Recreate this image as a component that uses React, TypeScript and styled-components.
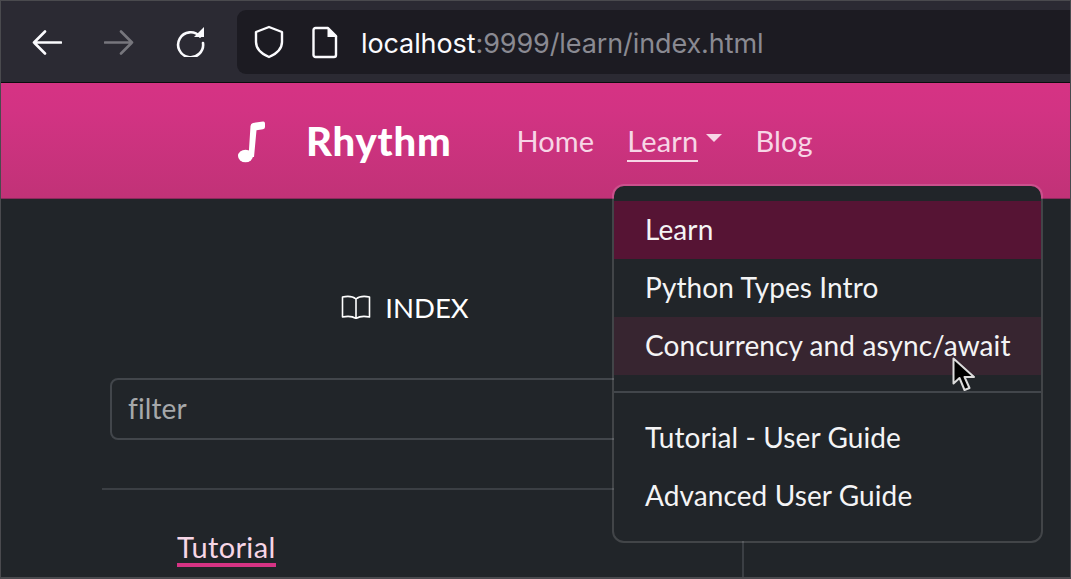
import React from "react";
import styled, { createGlobalStyle } from "styled-components";

const Global = createGlobalStyle`
  html, body { margin: 0; padding: 0; background: #212529; }
  * { box-sizing: border-box; }
`;

const Page = styled.div`
  position: relative;
  width: 1071px;
  height: 579px;
  overflow: hidden;
  background: #212529;
  font-family: "Lato", "Open Sans", sans-serif;
  display: flex;
  flex-direction: column;
  border: 1px solid #4a4a4e;
  border-width: 1px 1px 2px 1px;
`;

const Toolbar = styled.div`
  height: 82px;
  flex: none;
  background: #2b2a33;
  border-bottom: 1px solid #0c0c0d;
  display: flex;
  align-items: center;
  padding: 0 0 0 31px;
`;

const NavBtn = styled.svg<{ $dim?: boolean }>`
  width: 30px;
  height: 30px;
  flex: none;
  margin-right: 42px;
  fill: none;
  stroke: ${(p) => (p.$dim ? "#77767d" : "#fbfbfe")};
  stroke-width: 2.6;
  stroke-linecap: round;
  stroke-linejoin: round;
`;

const AddressBar = styled.div`
  flex: 1;
  height: 64px;
  margin-left: -11px;
  margin-right: -30px;
  background: #1c1b22;
  border-radius: 9px;
  display: flex;
  align-items: center;
  padding-left: 17px;
  font-family: "Inter", sans-serif;
  font-size: 27px;
  letter-spacing: -0.1px;
`;

const ShieldIcon = styled.svg`
  width: 30px;
  height: 34px;
  flex: none;
  margin-right: 28px;
  fill: none;
  stroke: #fbfbfe;
  stroke-width: 2.4;
  stroke-linejoin: round;
`;

const FileIcon = styled(ShieldIcon)`
  width: 26px;
  margin-right: 23px;
`;

const UrlText = styled.span`
  padding-top: 3px;
`;

const Host = styled.span`
  color: #fbfbfe;
`;
const UrlRest = styled.span`
  color: #8a8a92;
`;

const Header = styled.header`
  height: 116px;
  flex: none;
  background: linear-gradient(180deg, #d63384 0%, #d23383 25%, #c13277 100%);
  border-bottom: 1px solid #8a2a5c;
  display: flex;
  align-items: center;
  padding-left: 233px;
`;

const Note = styled.svg`
  width: 34px;
  height: 44px;
  flex: none;
  fill: #fff;
  margin-right: 38px;
`;

const Brand = styled.span`
  font-size: 40px;
  font-weight: 900;
  letter-spacing: 0.8px;
  color: #fff;
  margin-right: 65px;
`;

const NavItem = styled.span`
  font-size: 29px;
  color: #f7d6e6;
  letter-spacing: 0.15px;
  margin-right: 33px;
  display: inline-flex;
  align-items: center;
`;

const NavLabel = styled.span<{ $active?: boolean }>`
  border-bottom: 2px solid ${(p) => (p.$active ? "#f7d6e6" : "transparent")};
  padding-bottom: 2px;
  margin-top: 3px;
`;

const Caret = styled.span`
  width: 0;
  height: 0;
  margin-left: 8px;
  margin-bottom: 6px;
  border-left: 8.5px solid transparent;
  border-right: 8.5px solid transparent;
  border-top: 8px solid #f7d6e6;
`;

const Main = styled.main`
  flex: 1;
  display: flex;
  min-height: 0;
`;

const Sidebar = styled.aside`
  width: 743px;
  flex: none;
  border-right: 2px solid #3b3f44;
  padding: 0 0 0 101px;
  display: flex;
  flex-direction: column;
`;

const IndexTitle = styled.div`
  margin-top: 90px;
  display: flex;
  align-items: center;
  justify-content: center;
  gap: 14px;
  color: #fff;
  font-size: 27.5px;
  width: 606px;
  height: 36px;
`;

const Filter = styled.div`
  margin: 53px 0 0 8px;
  height: 62px;
  border: 2px solid #42464b;
  border-radius: 8px;
  display: flex;
  align-items: center;
  padding: 0 0 3px 16px;
  font-size: 28px;
  letter-spacing: 0.1px;
  color: #a6a8aa;
`;

const Rule = styled.div`
  margin-top: 48px;
  height: 2px;
  background: #3b3f44;
`;

const Tutorial = styled.span`
  margin: 40px 0 0 75px;
  align-self: flex-start;
  font-size: 29px;
  letter-spacing: 0.35px;
  color: #f7d6e6;
  line-height: 33px;
  border-bottom: 4px solid #d63384;
`;

const Menu = styled.div`
  position: absolute;
  left: 611px;
  top: 183px;
  width: 431px;
  height: 359px;
  background: #212529;
  border: 2px solid rgba(255, 255, 255, 0.15);
  background-clip: padding-box;
  border-radius: 12px;
  padding: 15px 0;
  display: flex;
  flex-direction: column;
`;

const MenuItem = styled.div<{ $bg?: string }>`
  height: 58px;
  flex: none;
  display: flex;
  align-items: center;
  padding: 0 0 3px 31px;
  font-size: 28px;
  letter-spacing: 0.1px;
  color: #f4f4f5;
  background: ${(p) => p.$bg || "transparent"};
`;

const MenuRule = styled.div`
  height: 2px;
  flex: none;
  margin: 16px 0;
  background: #42464b;
`;

const Cursor = styled.svg`
  position: absolute;
  left: 950px;
  top: 355px;
  width: 26px;
  height: 37px;
`;

export default function App() {
  return (
    <Page>
      <Global />
      <Toolbar>
        <NavBtn viewBox="0 0 30 30">
          <path d="M29 15.500H2M13 4.500 2 15.500l11 11" />
        </NavBtn>
        <NavBtn viewBox="0 0 30 30" $dim>
          <path d="M1 15.500h27M17 4.500l11 11-11 11" />
        </NavBtn>
        <NavBtn viewBox="0 0 30 30">
          <path d="M24 9.500A12.500 12.500 0 1 0 27 16" />
          <path d="M18 10h10V0z" fill="#fbfbfe" stroke="none" />
        </NavBtn>
        <AddressBar>
          <ShieldIcon viewBox="0 0 30 34">
            <path d="M15 2 2 7v10c0 7 6 12 13 15 7-3 13-8 13-15V7z" />
          </ShieldIcon>
          <FileIcon viewBox="0 0 26 34">
            <path d="M3.500 3h12.500l8 8v19a2 2 0 0 1-2 2H3.500a2 2 0 0 1-2-2V5a2 2 0 0 1 2-2z" />
            <path d="M15.500 2v10h10z" fill="#fbfbfe" stroke="none" />
          </FileIcon>
          <UrlText>
            <Host>localhost</Host>
            <UrlRest>:9999/learn/index.html</UrlRest>
          </UrlText>
        </AddressBar>
      </Toolbar>
      <Header>
        <Note viewBox="0 0 34 44">
          <ellipse cx="11.500" cy="37" rx="7.500" ry="6.300" />
          <path d="M14.500 38 L16.500 7 Q16.800 4.500 19 4 L29 2.500 Q31 2.300 31 4.500 V8 Q31 10 29 10.300 L22.500 11.300 L20 38z" />
        </Note>
        <Brand>Rhythm</Brand>
        <NavItem>
          <NavLabel>Home</NavLabel>
        </NavItem>
        <NavItem>
          <NavLabel $active>Learn</NavLabel>
          <Caret />
        </NavItem>
        <NavItem>
          <NavLabel>Blog</NavLabel>
        </NavItem>
      </Header>
      <Main>
        <Sidebar>
          <IndexTitle>
            <svg width="30" height="24" viewBox="0 0 30 24" fill="none" stroke="#fff" strokeWidth="1.6" strokeLinejoin="round">
              <path d="M15 4C12 1.500 6 1 1.500 2v20c4.500-1 10.500-.5 13.500 1.500C18 21.500 24 21 28.500 22V2C24 1 18 1.500 15 4zM15 4v19.500" />
            </svg>
            INDEX
          </IndexTitle>
          <Filter>filter</Filter>
          <Rule />
          <Tutorial>Tutorial</Tutorial>
        </Sidebar>
      </Main>
      <Menu>
        <MenuItem $bg="#561434">Learn</MenuItem>
        <MenuItem>Python Types Intro</MenuItem>
        <MenuItem $bg="#372530">Concurrency and async/await</MenuItem>
        <MenuRule />
        <MenuItem>Tutorial - User Guide</MenuItem>
        <MenuItem>Advanced User Guide</MenuItem>
      </Menu>
      <Cursor viewBox="0 0 26 37">
        <path d="M2.500 2.500v25l6-5.500 5 12 5-2-5-11h9.500z" fill="#000" stroke="#dcdcdc" strokeWidth="2" strokeLinejoin="round" />
      </Cursor>
    </Page>
  );
}
